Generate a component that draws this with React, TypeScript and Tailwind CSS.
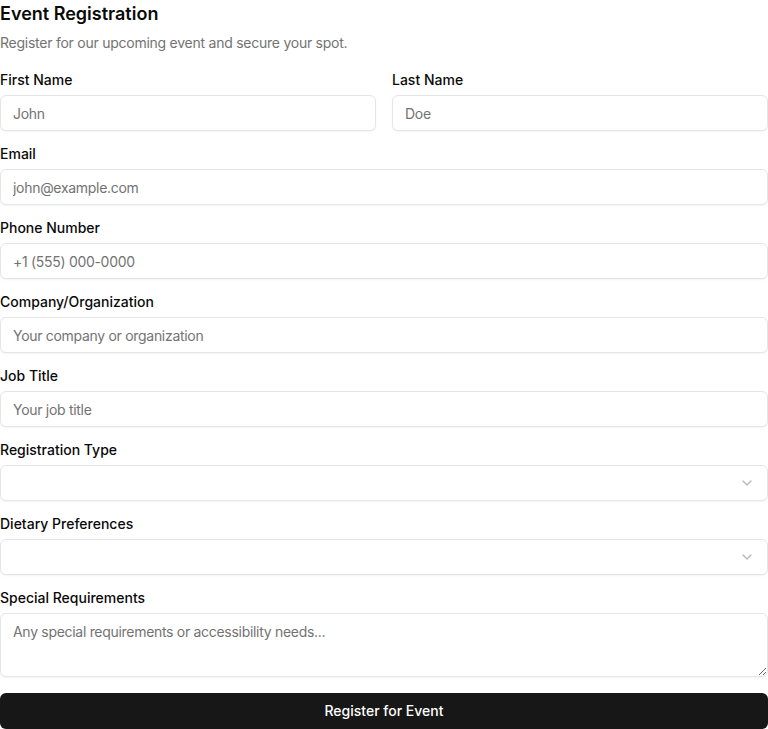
import React from "react";
import { ChevronDown } from "lucide-react";

const inputCls =
  "h-9 w-full rounded-md border border-[#e5e5e5] bg-white px-3 py-1 text-sm tracking-[-0.3px] text-[#0a0a0a] shadow-[0_1px_2px_0_rgba(0,0,0,0.05)] outline-none placeholder:text-[#737373]";

function Field({ label, children }: { label: string; children: React.ReactNode }) {
  return (
    <div className="flex flex-col gap-2">
      <label className="text-sm leading-none font-medium text-[#0a0a0a]">{label}</label>
      {children}
    </div>
  );
}

function Select() {
  return (
    <button
      type="button"
      className="flex h-9 w-full items-center justify-between rounded-md border border-[#e5e5e5] bg-white px-3 py-2 text-sm shadow-[0_1px_2px_0_rgba(0,0,0,0.05)]"
    >
      <span />
      <ChevronDown className="h-4 w-4 text-[#737373] opacity-50" strokeWidth={2} />
    </button>
  );
}

export default function App() {
  return (
    <div className="w-[768px] bg-white font-['Inter',sans-serif] text-[#0a0a0a]">
      <h2 className="text-lg leading-7 font-semibold">Event Registration</h2>
      <p className="mt-[5px] text-sm leading-5 tracking-[-0.25px] text-[#737373]">
        Register for our upcoming event and secure your spot.
      </p>
      <form className="mt-5 flex flex-col gap-4">
        <div className="grid grid-cols-2 gap-4">
          <Field label="First Name">
            <input className={inputCls} placeholder="John" />
          </Field>
          <Field label="Last Name">
            <input className={inputCls} placeholder="Doe" />
          </Field>
        </div>
        <Field label="Email">
          <input className={inputCls} placeholder="john@example.com" />
        </Field>
        <Field label="Phone Number">
          <input className={inputCls} placeholder="+1 (555) 000-0000" />
        </Field>
        <Field label="Company/Organization">
          <input className={inputCls} placeholder="Your company or organization" />
        </Field>
        <Field label="Job Title">
          <input className={inputCls} placeholder="Your job title" />
        </Field>
        <Field label="Registration Type">
          <Select />
        </Field>
        <Field label="Dietary Preferences">
          <Select />
        </Field>
        <Field label="Special Requirements">
          <textarea
            className="block h-16 min-h-16 w-full rounded-md border border-[#e5e5e5] bg-white px-3 py-2 text-sm tracking-[-0.3px] text-[#0a0a0a] shadow-[0_1px_2px_0_rgba(0,0,0,0.05)] outline-none placeholder:text-[#737373]"
            placeholder="Any special requirements or accessibility needs..."
          />
        </Field>
        <button
          type="button"
          className="h-9 w-full rounded-md bg-[#171717] text-sm font-medium text-white shadow-[0_1px_2px_0_rgba(0,0,0,0.05)]"
        >
          Register for Event
        </button>
      </form>
    </div>
  );
}
